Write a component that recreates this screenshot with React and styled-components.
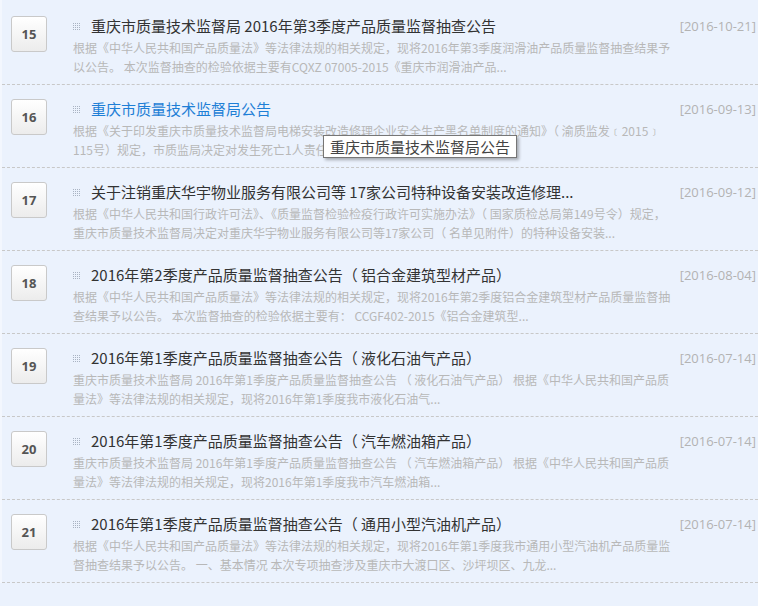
import React from 'react'
import styled, { createGlobalStyle } from 'styled-components'

const GlobalStyle = createGlobalStyle`
  html, body {
    margin: 0;
    padding: 0;
    background: #ebf2fd;
  }
  body {
    font-family: "Noto Sans CJK SC", "Noto Sans", sans-serif;
  }
`

const items = [
  {
    no: 15,
    title: '重庆市质量技术监督局 2016年第3季度产品质量监督抽查公告',
    date: '2016-10-21',
    desc: '根据《中华人民共和国产品质量法》等法律法规的相关规定，现将2016年第3季度润滑油产品质量监督抽查结果予以公告。 本次监督抽查的检验依据主要有CQXZ 07005-2015《重庆市润滑油产品...'
  },
  {
    no: 16,
    title: '重庆市质量技术监督局公告',
    date: '2016-09-13',
    active: true,
    desc: '根据《关于印发重庆市质量技术监督局电梯安装改造修理企业安全生产黑名单制度的通知》（ 渝质监发﹝2015﹞ 115号）规定，市质监局决定对发生死亡1人责任事故的重庆市奥的斯电梯有限...'
  },
  {
    no: 17,
    title: '关于注销重庆华宇物业服务有限公司等 17家公司特种设备安装改造修理...',
    date: '2016-09-12',
    desc: '根据《中华人民共和国行政许可法》、《质量监督检验检疫行政许可实施办法》（ 国家质检总局第149号令）规定，重庆市质量技术监督局决定对重庆华宇物业服务有限公司等17家公司（ 名单见附件）的特种设备安装...'
  },
  {
    no: 18,
    title: '2016年第2季度产品质量监督抽查公告（ 铝合金建筑型材产品）',
    date: '2016-08-04',
    desc: '根据《中华人民共和国产品质量法》等法律法规的相关规定，现将2016年第2季度铝合金建筑型材产品质量监督抽查结果予以公告。 本次监督抽查的检验依据主要有： CCGF402-2015《铝合金建筑型...'
  },
  {
    no: 19,
    title: '2016年第1季度产品质量监督抽查公告（ 液化石油气产品）',
    date: '2016-07-14',
    desc: '重庆市质量技术监督局 2016年第1季度产品质量监督抽查公告 （ 液化石油气产品） 根据《中华人民共和国产品质量法》等法律法规的相关规定，现将2016年第1季度我市液化石油气...'
  },
  {
    no: 20,
    title: '2016年第1季度产品质量监督抽查公告（ 汽车燃油箱产品）',
    date: '2016-07-14',
    desc: '重庆市质量技术监督局 2016年第1季度产品质量监督抽查公告 （ 汽车燃油箱产品） 根据《中华人民共和国产品质量法》等法律法规的相关规定，现将2016年第1季度我市汽车燃油箱...'
  },
  {
    no: 21,
    title: '2016年第1季度产品质量监督抽查公告（ 通用小型汽油机产品）',
    date: '2016-07-14',
    desc: '根据《中华人民共和国产品质量法》等法律法规的相关规定，现将2016年第1季度我市通用小型汽油机产品质量监督抽查结果予以公告。 一、基本情况 本次专项抽查涉及重庆市大渡口区、沙坪坝区、九龙...'
  }
]

const List = styled.ul`
  list-style: none;
  margin: 0;
  padding: 2px 0 0 0;
  border-left: 2px solid #f3f7fe;
`

const Row = styled.li`
  position: relative;
  display: flex;
  height: 82px;
  border-bottom: 1px dashed #c8c8c8;
  box-sizing: content-box;
`

const NumBox = styled.div`
  flex: none;
  width: 34px;
  height: 34px;
  margin: 14px 0 0 9px;
  border: 1px solid #c9c9c9;
  border-radius: 3px;
  background: linear-gradient(#ffffff, #ececec);
  display: flex;
  align-items: center;
  justify-content: center;
  font-family: "Open Sans", "Noto Sans", sans-serif;
  font-weight: 700;
  font-size: 13px;
  color: #555;
`

const Body = styled.div`
  flex: 1;
  min-width: 0;
  margin-left: 26px;
  padding-top: 13px;
`

const TitleLine = styled.div`
  display: flex;
  align-items: center;
  height: 22px;
`

const Bullet = styled.svg`
  flex: none;
  width: 7px;
  height: 7px;
  margin-right: 11px;
`

const Title = styled.a`
  flex: 1;
  font-size: 15px;
  line-height: 22px;
  color: ${p => (p.$active ? '#1e7fd6' : '#333')};
  text-decoration: none;
  white-space: nowrap;
`

const DateText = styled.span`
  flex: none;
  margin-right: 2px;
  font-family: "Open Sans", "Noto Sans", sans-serif;
  font-size: 13px;
  color: #b3b3b3;
`

const Desc = styled.p`
  margin: 1px 0 0 0;
  width: 604px;
  font-size: 12px;
  line-height: 19px;
  color: #b8b8b8;
`

const Tooltip = styled.div`
  position: absolute;
  left: 321px;
  top: 50px;
  padding: 0 6px;
  height: 21px;
  line-height: 21px;
  background: #fff;
  border: 1px solid #767676;
  box-shadow: 2px 2px 3px rgba(0, 0, 0, 0.3);
  font-size: 15px;
  color: #444;
  white-space: nowrap;
`

const BulletIcon = () => (
  <Bullet viewBox="0 0 7 7">
    {[0, 2, 4, 6].map(y =>
      [0, 2, 4, 6].map(x => (
        <rect key={`${x}-${y}`} x={x} y={y} width="1" height="1" fill="#a9b3c2" />
      ))
    )}
  </Bullet>
)

const App = () => (
  <>
    <GlobalStyle />
    <List>
      {items.map(item => (
        <Row key={item.no}>
          <NumBox>{item.no}</NumBox>
          <Body>
            <TitleLine>
              <BulletIcon />
              <Title href="#" $active={item.active}>{item.title}</Title>
              <DateText>[{item.date}]</DateText>
            </TitleLine>
            <Desc>{item.desc}</Desc>
          </Body>
          {item.active && <Tooltip>{item.title}</Tooltip>}
        </Row>
      ))}
    </List>
  </>
)

export default App
